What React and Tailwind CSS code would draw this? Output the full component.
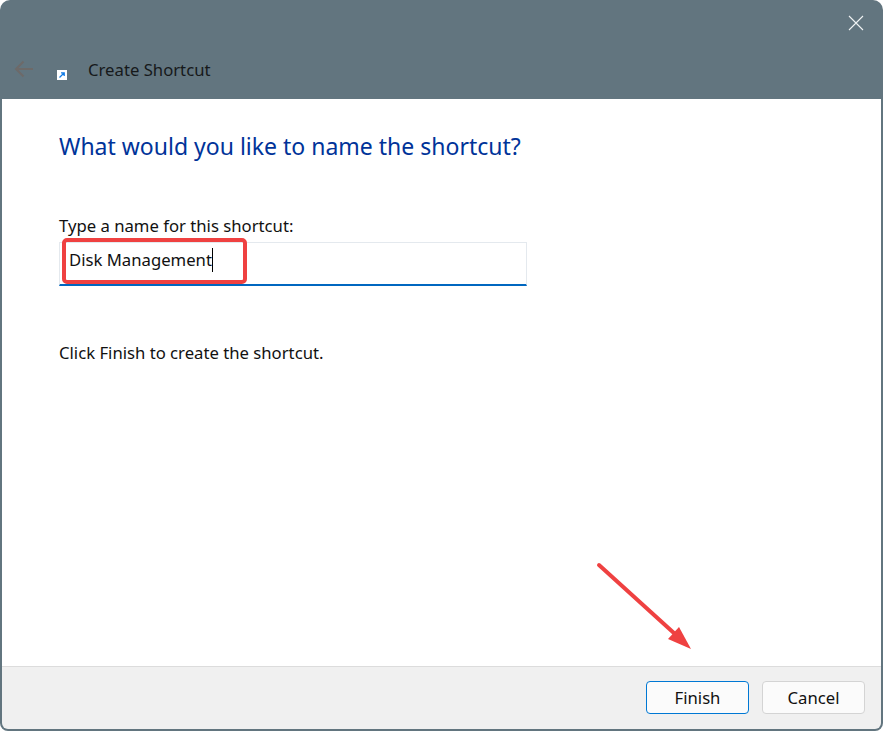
import React from 'react';

const font = { fontFamily: '"Noto Sans", sans-serif' };

const App = () => {
  return (
    <div className="relative w-[883px] h-[731px] bg-white overflow-hidden" style={font}>
      <div className="flex flex-col h-full bg-[#62757f] rounded-t-[10px] rounded-b-[8px] px-[2px] pb-[2px]">
        {/* title bar */}
        <div className="relative h-[99px] shrink-0 flex items-start pt-[59px] -mx-[2px]">
          <svg width="20" height="18" viewBox="0 0 20 18" className="ml-[14px] mt-[1px]" fill="none" stroke="#6d6a69" strokeWidth="2">
            <path d="M19 9H2M9.5 1.5 2 9l7.5 7.5" />
          </svg>
          <svg width="10" height="10" viewBox="0 0 10 10" className="ml-[23px] mt-[11px]">
            <rect width="10" height="10" fill="#fff" />
            <path d="M2.5 7.5 7 3M4 2.8h3.2V6" fill="none" stroke="#0f7ae5" strokeWidth="1.3" />
          </svg>
          <span className="ml-[21px] text-[16.7px] leading-[22px] text-[#16191b]">Create Shortcut</span>
          <svg width="16" height="16" viewBox="0 0 16 16" className="absolute top-[15px] right-[19px]" fill="none" stroke="#f0f3f4" strokeWidth="1.1">
            <path d="M1 1l14 14M15 1 1 15" />
          </svg>
        </div>

        {/* body */}
        <div className="flex-1 bg-white pl-[57px] pt-[31px]">
          <h1 className="text-[23px] leading-[32px] font-normal text-[#003399]">What would you like to name the shortcut?</h1>
          <label className="block mt-[53px] text-[16.7px] leading-[22px] text-[#111]">Type a name for this shortcut:</label>
          <div className="mt-[5px] w-[468px] h-[44px] border border-[#e4e9ee] border-b-2 border-b-[#0067c0] flex items-center pl-[9px] pb-[7px]">
            <span className="text-[16.7px] leading-[22px] text-[#111]">Disk Management</span>
            <span className="w-px h-[24px] bg-black"></span>
          </div>
          <p className="mt-[56px] text-[16.7px] leading-[22px] text-[#111]">Click Finish to create the shortcut.</p>
        </div>

        {/* footer */}
        <div className="h-[63px] shrink-0 bg-[#f0f0f0] border-t border-[#dcdcdc] rounded-b-[6px] flex justify-end items-start pt-[14px] pr-[16px] gap-[13px]">
          <button className="w-[103px] h-[33px] bg-[#fbfbfb] border border-[#0078d4] rounded-[4px] text-[16.7px] leading-[22px] text-[#111]">Finish</button>
          <button className="w-[103px] h-[33px] bg-[#fbfbfb] border border-[#d4d4d4] rounded-[4px] text-[16.7px] leading-[22px] text-[#111]">Cancel</button>
        </div>
      </div>

      {/* red annotations */}
      <div className="absolute left-[62px] top-[238px] w-[185px] h-[46px] border-4 border-[#ef4141] rounded-[5px]"></div>
      <svg className="absolute left-[590px] top-[556px]" width="110" height="100" viewBox="0 0 110 100">
        <path d="M9 9 85 78" stroke="#ef4141" strokeWidth="4" strokeLinecap="round" fill="none" />
        <path d="M89 71 101 93 78 83Z" fill="#ef4141" />
      </svg>
    </div>
  );
};

export default App;
